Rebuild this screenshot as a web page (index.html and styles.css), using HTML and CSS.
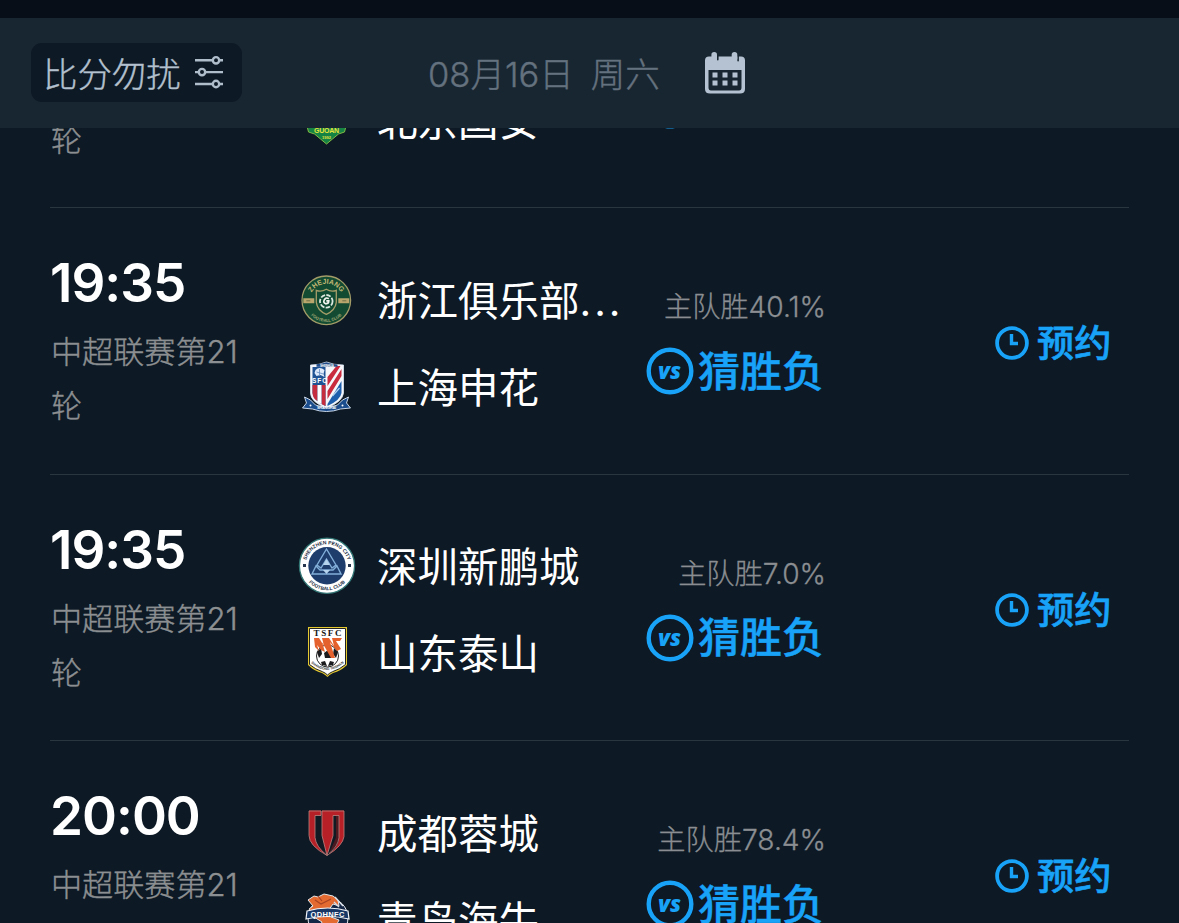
FILE: index.html
```html
<!DOCTYPE html>
<html lang="zh-CN">

<head>
    <meta charset="UTF-8">
    <meta name="viewport" content="width=device-width, initial-scale=1.0">
    <title>赛程</title>
    <link rel="stylesheet" href="styles.css">
</head>

<body>
    <!-- shared icons -->
    <svg class="defs" width="0" height="0">
        <symbol id="vs" viewBox="0 0 48 48">
            <circle cx="24" cy="24" r="21.3" fill="none" stroke="#18a2f8" stroke-width="4.4"/>
            <text x="23.5" y="31.5" class="vs-text">vs</text>
        </symbol>
        <symbol id="clock" viewBox="0 0 34 34">
            <circle cx="17" cy="17" r="14.9" fill="none" stroke="#18a2f8" stroke-width="3.8"/>
            <path d="M16.500 8v9.500H23" fill="none" stroke="#18a2f8" stroke-width="3.400"/>
        </symbol>
    </svg>

    <div class="status"></div>

    <header class="topbar">
        <div class="mute">
            <span>比分勿扰</span>
            <svg width="30" height="34" viewBox="0 0 30 34" fill="none" stroke="#afbdcb" stroke-width="2.4">
                <path d="M1 5.3h17M25 5.3h4M1 17.1h4M12 17.1h17M1 29h17M25 29h4"/>
                <circle cx="22" cy="5.3" r="3.2"/>
                <circle cx="8" cy="17.1" r="3.2"/>
                <circle cx="22" cy="29" r="3.2"/>
            </svg>
        </div>
        <div class="date"><span>08月16日</span><span>周六</span></div>
        <svg class="calendar" width="42" height="42" viewBox="0 0 42 42">
            <path fill="#b5c2d2" fill-rule="evenodd" d="M5 4.500h8v3q0 1 .8 1t.8-1v-3h18.700v4q0 1 .8 1t.8-1v-4H37q4 0 4 4V37q0 4.500-5 4.500H6q-5 0-5-4.500V8.500q0-4 4-4zM4.500 18v17.500q0 3 2.500 3h28q2.500 0 2.500-3V18z"/>
            <rect x="7.400" y="0" width="5.600" height="9" rx="2.800" fill="#b5c2d2"/>
            <rect x="27.700" y="0" width="5.600" height="9" rx="2.800" fill="#b5c2d2"/>
            <path fill="#b5c2d2" d="M8.500 20.500h5v5h-5zM18.500 20.500h5v5h-5zM28.500 20.500h5v5h-5zM8.500 28.500h5v5h-5zM18.500 28.500h5v5h-5zM28.500 28.500h5v5h-5z"/>
        </svg>
    </header>

    <main class="list">
        <section class="match">
            <div class="when">
                <div class="time">19:35</div>
                <div class="league">中超联赛第21<br>轮</div>
            </div>
            <div class="teams">
                <div class="team"><span class="logo"></span><span>青岛西海岸</span></div>
                <div class="team">
                    <svg class="logo" viewBox="0 0 56 56">
                        <g transform="translate(-.5 2)">
                            <path d="M28 5L41 14 42 27 48 30 46 38 40 40 34 45 28 50 22 45 16 40 10 38 8 30 14 27 15 14z" fill="#158344" stroke="#81b943" stroke-width="1"/>
                            <path d="M17 25h22l-3 6H20z" fill="#25a153"/>
                            <path d="M25 27h6v4h-6z" fill="#efcc32"/>
                            <text x="28" y="39" textLength="25" class="crest-text" font-size="7" fill="#e7e43d">GUOAN</text>
                            <text x="28" y="44.500" textLength="9" class="crest-text" font-size="4" fill="#e7e43d">1992</text>
                        </g>
                    </svg>
                    <span>北京国安</span>
                </div>
            </div>
            <div class="predict">
                <div class="odds">主队胜40.1%</div>
                <div class="guess"><svg class="vs"><use href="#vs"/></svg>猜胜负</div>
            </div>
        </section>

        <section class="match">
            <div class="when">
                <div class="time">19:35</div>
                <div class="league">中超联赛第21<br>轮</div>
            </div>
            <div class="teams">
                <div class="team">
                    <svg class="logo" viewBox="0 0 56 56">
                        <g transform="translate(.3 1.300)">
                            <circle cx="27" cy="27" r="24.300" fill="#124b32" stroke="#a39c68" stroke-width="1.300"/>
                            <path id="zjTop" d="M10.500 27a16.500 16.500 0 0 1 33 0" fill="none"/>
                            <path id="zjBottom" d="M5.500 27a21.500 21.500 0 0 0 43 0" fill="none"/>
                            <text class="crest-text narrow" font-size="7" fill="#c5b875"><textPath href="#zjTop" startOffset="50%">ZHEJIANG</textPath></text>
                            <text class="crest-text" font-size="4" fill="#a9ad79"><textPath href="#zjBottom" startOffset="50%">FOOTBALL CLUB</textPath></text>
                            <path d="M4 25h11v5H4zM39 25h11v5H39z" fill="#b8a66d"/>
                            <path d="M7 27.500h4M43 27.500h4" stroke="#6e7047"/>
                            <path d="M17 17q5 2 10-1 5 3 10 1v12q-1 8-10 12-9-4-10-12z" fill="#104b33" stroke="#a69e69" stroke-width="1.300"/>
                            <circle cx="27" cy="28" r="6.300" fill="none" stroke="#dce8df" stroke-width="1.800" stroke-dasharray="4.500 1.300"/>
                            <path d="M29.500 25.500q-3-2-4.500 1t1.500 4q3 0 3-3h-2.500" fill="none" stroke="#f2f5ef" stroke-width="1.700"/>
                        </g>
                    </svg>
                    <span>浙江俱乐部<i class="dots">...</i></span>
                </div>
                <div class="team">
                    <svg class="logo" viewBox="0 0 56 56">
                        <g transform="translate(.5 1)">
                            <path d="M11 5q9 0 16-3 7 3 17 3v28q-1 9-17 15-16-6-16-15z" fill="#f5f7fb" stroke="#dce8f5" stroke-width=".8"/>
                            <path d="M13 7q8 0 13-2v41q-12-5-13-13z" fill="#205394"/>
                            <path d="M13 25h5v16q-5-3-5-8zM22 25h4v21l-4-2z" fill="#c52c3e"/>
                            <path d="M18 25h4v19l-4-2z" fill="#fff"/>
                            <path d="M28 17l9-11h4L28 26zM28 31L42 9v7L28 39z" fill="#c92a3d"/>
                            <path d="M28 44l14-23v12q-1 7-14 13z" fill="#1d5fac"/>
                            <path d="M33 36l7-8" stroke="#b8d4ef" stroke-width="1.200"/>
                            <path d="M16 10q4-4 9 0l-1 4 1 3-4-2-4 1-2-3z" fill="#dfeafa"/>
                            <path d="M17 12l7 2M20 9v7" stroke="#648dc1" stroke-width=".8"/>
                            <text x="20" y="23" textLength="15" class="crest-text" font-size="6.500" fill="#fff">SFC</text>
                            <path d="M17 4.300q6-.3 10-2 4 1.700 11 2.300v2.200H17z" fill="#234d88"/>
                            <text x="27.500" y="6.500" textLength="14" class="crest-text" font-size="3" fill="#fff">SHENHUA</text>
                            <path d="M5 37l6 3 5 5q11 4 22 0l5-5 6-3-2 6 4 5-10 1q-14 5-28 0L3 48l4-5z" fill="#1b4c8c" stroke="#dce9f7" stroke-width=".9"/>
                            <text x="27" y="49" textLength="19" class="crest-text" font-size="3.800" fill="#fff">SHANGHAI</text>
                            <circle cx="11" cy="45.500" r="1" fill="#fff"/>
                            <circle cx="43" cy="45.500" r="1" fill="#fff"/>
                        </g>
                    </svg>
                    <span>上海申花</span>
                </div>
            </div>
            <div class="predict">
                <div class="odds">主队胜40.1%</div>
                <div class="guess"><svg class="vs"><use href="#vs"/></svg>猜胜负</div>
            </div>
            <div class="reserve"><svg class="clock"><use href="#clock"/></svg><span>预约</span></div>
        </section>

        <section class="match">
            <div class="when">
                <div class="time">19:35</div>
                <div class="league">中超联赛第21<br>轮</div>
            </div>
            <div class="teams">
                <div class="team">
                    <svg class="logo" viewBox="0 0 56 56">
                        <circle cx="28" cy="27.800" r="27.600" fill="#fff" stroke="#337776" stroke-width="1.300"/>
                        <circle cx="28" cy="27.800" r="18.700" fill="#1e3d6c"/>
                        <path id="szTop" d="M6.500 27.800a21.500 21.500 0 0 1 43 0" fill="none"/>
                        <path id="szBottom" d="M3.500 27.800a24.500 24.500 0 0 0 49 0" fill="none"/>
                        <text class="crest-text" font-size="5" fill="#1a2b42"><textPath href="#szTop" startOffset="50%">SHENZHEN PENG CITY</textPath></text>
                        <text class="crest-text" font-size="4.800" fill="#1a2b42"><textPath href="#szBottom" startOffset="50%">FOOTBALL CLUB</textPath></text>
                        <path d="M4 26h3v3H4zM49 26h3v3h-3z" fill="#26364e"/>
                        <path d="M27.500 11L37 27l-4 3-5.500-9-5.500 9-4-3zM17 28l4 4h13l4-4 4 8H13z" fill="none" stroke="#82aeda" stroke-width="1.400"/>
                        <path d="M24 27h7l-3.500-6zM24 32h7l-3.500 4z" fill="#b6d3ed"/>
                    </svg>
                    <span>深圳新鹏城</span>
                </div>
                <div class="team">
                    <svg class="logo" viewBox="0 0 56 56">
                        <path d="M9 2h39v38q-6 6-14 8-4 2-5.500 4-2-2-5.500-4Q15 46 9 40z" fill="#e5c930"/>
                        <path d="M10.500 3.500h36v36q-6 5-13 7.200-3 1.300-5 3.300-2-2-5-3.300-7-2.200-13-7.200z" fill="#fff" stroke="#222" stroke-width="1"/>
                        <text x="28.500" y="10.500" textLength="28" class="crest-text serif" font-size="9" fill="#171717">TSFC</text>
                        <circle cx="28.500" cy="31" r="11" fill="#fff" stroke="#222" stroke-width="1"/>
                        <path d="M25 28l4-3 4 3-1 5h-6zM18 27l4-4 1 6-3 4zM39 27l-4-4-1 6 3 4zM22 37l4-1 2 5-5-1zM35 37l-4-1-2 5 5-1z" fill="#1c1c1e"/>
                        <path d="M15 13h5l5 8-2-8h7l5 8-2-8h10l-2 3h-4l5 8-4 2-7-9 5 16h-4l-9-16 3 10-4-2-4-5 2 6-4-4z" fill="#e4602c"/>
                        <path id="tsCurve" d="M12 38q16 14 33 0" fill="none"/>
                        <text class="crest-text" font-size="3.500" fill="#333"><textPath href="#tsCurve" startOffset="50%">SHANDONG TAISHAN</textPath></text>
                    </svg>
                    <span>山东泰山</span>
                </div>
            </div>
            <div class="predict">
                <div class="odds">主队胜7.0%</div>
                <div class="guess"><svg class="vs"><use href="#vs"/></svg>猜胜负</div>
            </div>
            <div class="reserve"><svg class="clock"><use href="#clock"/></svg><span>预约</span></div>
        </section>

        <section class="match">
            <div class="when">
                <div class="time">20:00</div>
                <div class="league">中超联赛第21<br>轮</div>
            </div>
            <div class="teams">
                <div class="team">
                    <svg class="logo" viewBox="0 0 56 56">
                        <g transform="translate(0 1.500)">
                            <path d="M10 4h35v26q-1 10-17 19Q10 39 10 29z" fill="#111a23"/>
                            <path d="M10 4h12v5h-6v22q1 9 11 17Q10 39 10 29z" fill="#b72026"/>
                            <path d="M23 4h22v26q-1 9-15 18 10-8 10-17V9h-6v20l-6 20-5-20z" fill="#b72026"/>
                            <path d="M37 9h3v22q-1 8-9 14l6-14z" fill="#4b191f"/>
                            <path d="M10 4.500h12V9h-6v22q1 9 11 17M23 9V4.500h22V30q-1 9-17 19Q10 39 10 29V4.500M34 29V9h6v22q-1 9-10 16M23 9v20l5 20 6-20" fill="none" stroke="#bc8382" stroke-width=".8"/>
                        </g>
                    </svg>
                    <span>成都蓉城</span>
                </div>
                <div class="team">
                    <svg class="logo" viewBox="0 0 56 56">
                        <g transform="translate(0 1)">
                            <circle cx="29" cy="25" r="20" fill="#142746" stroke="#e9eef3" stroke-width="1"/>
                            <path d="M9 7l6-4 4 1 6-3 9 2 5 4 1 6-6-2-5 7 3 6 8 3-11 22H14l9-20-8-5-5-8 4-3z" fill="#e36a31" stroke="#e3e6e8" stroke-width="1"/>
                            <path d="M16 7l6 4 10-5M19 3l4 5" fill="none" stroke="#a94323" stroke-width="1.200"/>
                            <path d="M36 4l8 9M35 9l5 5" stroke="#d6dde6" stroke-width="1.400"/>
                            <path d="M8 18q21-6 41 0l1 8q-21-5-43 0z" fill="#173766" stroke="#f1f4f8" stroke-width="1.200"/>
                            <text x="28.500" y="23.500" textLength="34" class="crest-text" font-size="7.500" fill="#fff">QDHNFC</text>
                        </g>
                    </svg>
                    <span>青岛海牛</span>
                </div>
            </div>
            <div class="predict">
                <div class="odds">主队胜78.4%</div>
                <div class="guess"><svg class="vs"><use href="#vs"/></svg>猜胜负</div>
            </div>
            <div class="reserve"><svg class="clock"><use href="#clock"/></svg><span>预约</span></div>
        </section>
    </main>
</body>

</html>
```
FILE: styles.css
```css
* {
    box-sizing: border-box;
    padding: 0;
    margin: 0;
}

body {
    height: 923px;
    overflow: hidden;
    display: flex;
    flex-direction: column;
    background-color: #0d1924;
    color: #fff;
    font-family: Inter, "Noto Sans CJK SC", sans-serif;
}

svg {
    display: block;
    flex: none;
}

.defs {
    position: absolute;
}

.status {
    height: 18px;
    flex: none;
    background-color: #070e18;
}

.topbar {
    height: 110px;
    flex: none;
    display: flex;
    align-items: center;
    padding-left: 31px;
    background-color: #182631;
}

.mute {
    width: 211px;
    height: 59px;
    display: flex;
    align-items: center;
    gap: 13px;
    margin-bottom: 2px;
    padding-left: 12px;
    border-radius: 11px;
    background-color: #0d1925;
    color: #b3c0ce;
    font-size: 34.4px;
    font-weight: 300;
    -webkit-text-stroke: 0.4px;
    white-space: nowrap;
}

.mute span {
    padding-bottom: 1px;
}

.date {
    display: flex;
    gap: 17px;
    width: 276px;
    margin-left: 186px;
    padding-bottom: 3px;
    color: #64717e;
    font-size: 34.5px;
    font-weight: 300;
    -webkit-text-stroke: 0.4px;
    white-space: nowrap;
}

.list {
    flex: 1;
    min-height: 0;
    overflow: hidden;
    padding: 0 50px;
}

.match {
    height: 266.5px;
    display: flex;
    border-bottom: 1.5px solid #293640;
}

/* the list is scrolled partway through the first match */
.match:first-child {
    margin-top: -186.3px;
}

.when {
    width: 249px;
    padding-top: 45px;
}

.time {
    line-height: 60px;
    font-size: 53px;
    font-weight: 600;
    letter-spacing: -1px;
}

.league {
    margin-top: 12px;
    padding-left: 1px;
    line-height: 54px;
    font-size: 31.1px;
    font-weight: 300;
    -webkit-text-stroke: 0.4px;
    color: #8c8f91;
}

.teams {
    width: 340px;
    padding-top: 48px;
}

.team {
    height: 87px;
    display: flex;
    align-items: center;
    gap: 22px;
    font-size: 40.5px;
    white-space: nowrap;
}

.team span {
    padding-bottom: 3px;
}

.logo {
    width: 56px;
    height: 56px;
    overflow: visible;
}

.dots {
    font-style: normal;
    letter-spacing: 3px;
}

.predict {
    width: 187px;
    padding-top: 79px;
    display: flex;
    flex-direction: column;
    align-items: flex-end;
}

.odds {
    line-height: 40px;
    font-size: 28.2px;
    font-weight: 300;
    -webkit-text-stroke: 0.3px;
    color: #8a8e92;
    white-space: nowrap;
}

.guess {
    margin-top: 20px;
    padding-right: 2px;
    display: flex;
    align-items: center;
    gap: 4px;
    line-height: 48px;
    font-size: 42px;
    font-weight: 500;
    -webkit-text-stroke: 0.4px;
    color: #18a2f8;
    white-space: nowrap;
}

.vs {
    width: 48px;
    height: 48px;
    margin-bottom: 1px;
}

.vs-text {
    font-family: "Open Sans", sans-serif;
    font-size: 22px;
    font-weight: 800;
    font-style: italic;
    text-anchor: middle;
    fill: #18a2f8;
    stroke: none;
}

.reserve {
    height: 48px;
    margin-top: 111px;
    margin-left: 169px;
    display: flex;
    align-items: center;
    gap: 8px;
    font-size: 37.2px;
    font-weight: 500;
    -webkit-text-stroke: 0.6px;
    color: #18a2f8;
    white-space: nowrap;
}

.reserve span {
    padding-bottom: 4px;
}

.clock {
    width: 34px;
    height: 34px;
}

.crest-text {
    font-family: "Liberation Sans", sans-serif;
    font-weight: 700;
    text-anchor: middle;
}

.narrow {
    font-family: "Liberation Sans Narrow", "Liberation Sans", sans-serif;
}

.serif {
    font-family: "Liberation Serif", serif;
}
```
